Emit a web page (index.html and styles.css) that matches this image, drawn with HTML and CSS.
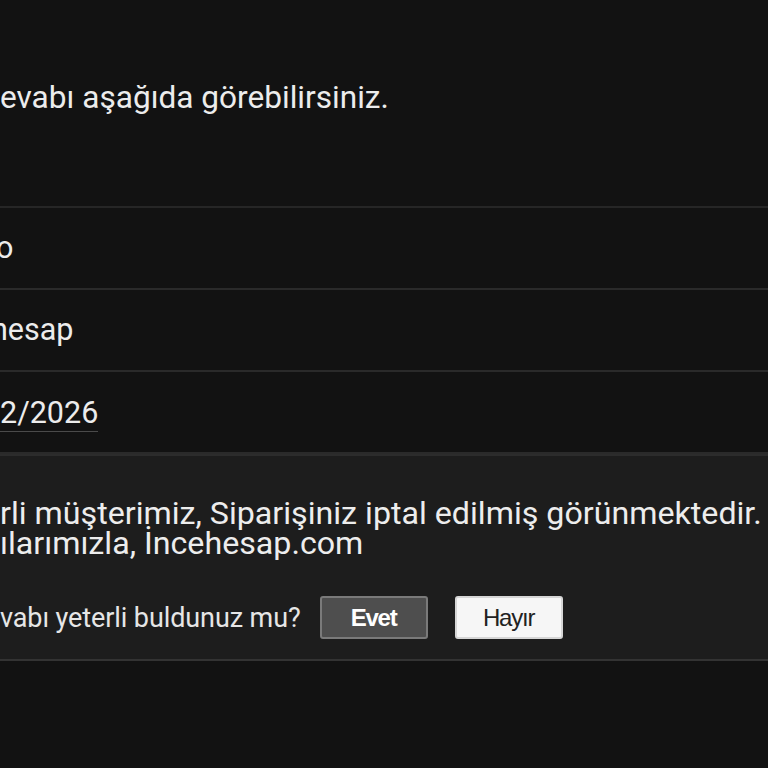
FILE: index.html
```html
<!DOCTYPE html>
<html lang="tr">
<head>
<meta charset="utf-8">
<link rel="stylesheet" href="styles.css">
</head>
<body>
<div class="page">
  <div class="intro">evabı aşağıda görebilirsiniz.</div>
  <div class="row"><span class="val cut-o">o</span></div>
  <div class="row"><span class="val cut-h">hesap</span></div>
  <div class="row"><span class="val date">2/2026</span></div>
  <div class="panel">
    <div class="answer">
      <div class="line">rli müşterimiz, Siparişiniz iptal edilmiş görünmektedir.</div>
      <div class="line">ılarımızla, İncehesap.com</div>
    </div>
    <div class="feedback">
      <span class="question">vabı yeterli buldunuz mu?</span>
      <button class="btn btn-yes">Evet</button>
      <button class="btn btn-no">Hayır</button>
    </div>
  </div>
</div>
</body>
</html>
```

FILE: styles.css
```css
html, body {
  margin: 0;
  padding: 0;
  background: #121212;
}
body {
  color: #ececec;
  font-family: Roboto, "Noto Sans", sans-serif;
  overflow: hidden;
}
.page {
  width: 768px;
}
.intro {
  font-size: 31.6px;
  line-height: 36px;
  padding-top: 80px;
  height: 126px;
  border-bottom: 2px solid #262626;
}
.row {
  height: 80px;
  display: flex;
  align-items: center;
  border-bottom: 2px solid #2a2a2a;
  font-size: 30.5px;
}
.val {
  line-height: 34px;
}
.cut-o {
  margin-left: -4px;
}
.cut-h {
  margin-left: -9px;
}
.date {
  border-bottom: 1px solid #4a4a4a;
  padding-bottom: 1px;
  margin-top: 4px;
}
.panel {
  background: #1d1d1d;
  border-top: 2px solid #2c2c2c;
  border-bottom: 2px solid #333;
  padding: 42px 0 20px 0;
}
.answer {
  font-size: 32.2px;
  line-height: 30px;
  color: #ededed;
}
.line {
  white-space: nowrap;
}
.feedback {
  display: flex;
  align-items: center;
  margin-top: 38px;
}
.question {
  font-size: 27px;
  color: #e6e6e6;
  margin-right: 19px;
  letter-spacing: -0.1px;
}
.btn {
  width: 108px;
  height: 43px;
  border-radius: 3px;
  font-family: "Liberation Sans", Arial, sans-serif;
  font-size: 24px;
  letter-spacing: -1.2px;
  padding: 0;
}
.btn-yes {
  background: #4e4e4e;
  border: 2px solid #7a7a7a;
  color: #fff;
  font-weight: bold;
  margin-right: 27px;
}
.btn-no {
  background: #f6f6f6;
  border: 2px solid #d6d6d6;
  color: #222;
}
```
